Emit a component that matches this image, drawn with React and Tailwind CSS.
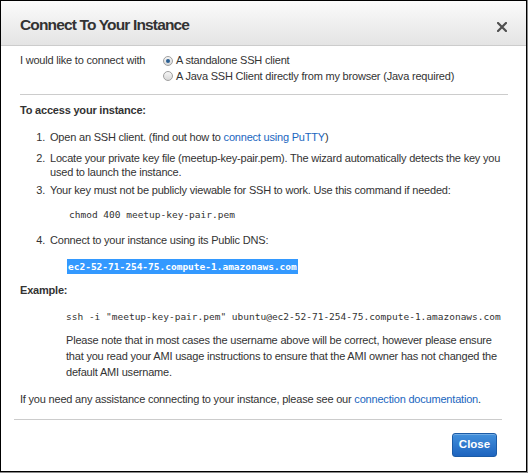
import React from 'react';

function Radio({ checked }) {
  return (
    <span className="inline-flex w-[10px] h-[10px] rounded-full border border-[#a0a0a0] bg-gradient-to-b from-[#f6f6f6] to-[#d8d8d8] items-center justify-center mr-[3px] shrink-0">
      {checked && <span className="w-[4px] h-[4px] rounded-full bg-[#2b5f93]" />}
    </span>
  );
}

export default function App() {
  return (
    <div className="w-[528px] h-[473px] bg-[#8a8a8a] font-['Liberation_Sans',Arial,sans-serif]">
      <div className="w-[527px] h-[472px] border border-black bg-white flex flex-col text-[11px] tracking-[-0.2px] text-[#333]">
        {/* Header */}
        <div className="h-[45px] shrink-0 flex items-center justify-between pl-[19px] pr-[19px] bg-gradient-to-b from-[#fbfbfb] to-[#e4e4e4] border-b border-[#cccccc]">
          <h1 className="text-[15.5px] font-bold tracking-[-0.85px] text-[#333] pt-[4px]">Connect To Your Instance</h1>
          <svg width="10" height="10" viewBox="0 0 10 10" className="mt-[7px]">
            <path d="M1 1 L9 9 M9 1 L1 9" stroke="#505050" strokeWidth="2.2" strokeLinecap="square" />
          </svg>
        </div>

        {/* Body */}
        <div className="px-[19px] pt-[7px]">
          <div className="flex">
            <div className="w-[143px] leading-[15px]">I would like to connect with</div>
            <div className="flex flex-col">
              <label className="flex items-center leading-[15px]">
                <Radio checked />A standalone SSH client
              </label>
              <label className="flex items-center leading-[16px]">
                <Radio />A Java SSH Client directly from my browser (Java required)
              </label>
            </div>
          </div>
          <div className="border-t border-[#cccccc] mt-[10px] w-[488px]" />

          <div className="font-bold mt-[8px] leading-[15px]">To access your instance:</div>

          <ol className="mt-[12px] leading-[14px]">
            <li className="flex">
              <span className="w-[30px] shrink-0 text-right pr-[5px]">1.</span>
              <span>
                Open an SSH client. (find out how to{' '}
                <a className="text-[#1a66c0]">connect using PuTTY</a>)
              </span>
            </li>
            <li className="flex mt-[7px]">
              <span className="w-[30px] shrink-0 text-right pr-[5px]">2.</span>
              <span>
                Locate your private key file (meetup-key-pair.pem). The wizard automatically detects the key you used to launch the instance.
              </span>
            </li>
            <li className="flex mt-[4px]">
              <span className="w-[30px] shrink-0 text-right pr-[5px]">3.</span>
              <span>Your key must not be publicly viewable for SSH to work. Use this command if needed:</span>
            </li>
          </ol>
          <div className="font-['DejaVu_Sans_Mono',monospace] text-[9.5px] tracking-normal text-[#333] pl-[49px] mt-[10px] leading-[15px]">chmod 400 meetup-key-pair.pem</div>

          <div className="flex mt-[11px] leading-[15px]">
            <span className="w-[30px] shrink-0 text-right pr-[5px]">4.</span>
            <span>Connect to your instance using its Public DNS:</span>
          </div>
          <div className="pl-[47px] mt-[10px] h-[15px]">
            <span className="inline-block font-['DejaVu_Sans_Mono',monospace] text-[9.5px] tracking-normal leading-[15px] bg-[#3399ff] text-white font-bold px-[1px]">ec2-52-71-254-75.compute-1.amazonaws.com</span>
          </div>

          <div className="font-bold mt-[10px] leading-[15px]">Example:</div>
          <div className="font-['DejaVu_Sans_Mono',monospace] text-[9.5px] tracking-normal pl-[46px] mt-[11px] leading-[15px] whitespace-nowrap">
            ssh -i "meetup-key-pair.pem" ubuntu@ec2-52-71-254-75.compute-1.amazonaws.com
          </div>
          <p className="pl-[46px] mt-[8px] leading-[16px]">
            Please note that in most cases the username above will be correct, however please ensure that you read your AMI usage instructions to ensure that the AMI owner has not changed the default AMI username.
          </p>
          <p className="mt-[12px] leading-[15px]">
            If you need any assistance connecting to your instance, please see our{' '}
            <a className="text-[#1a66c0]">connection documentation</a>.
          </p>
        </div>
        <div className="border-t border-[#cccccc] mt-[12px] ml-[13px] w-[488px]" />

        {/* Footer */}
        <div className="flex justify-end pr-[29px] pt-[13px]">
          <button className="h-[24px] w-[45px] rounded-[3px] border border-[#1b5ba6] bg-gradient-to-b from-[#4290dc] to-[#1e64bf] text-white font-bold text-[11.5px] tracking-normal shadow-[inset_0_1px_0_rgba(255,255,255,0.25)]">
            Close
          </button>
        </div>
      </div>
    </div>
  );
}
